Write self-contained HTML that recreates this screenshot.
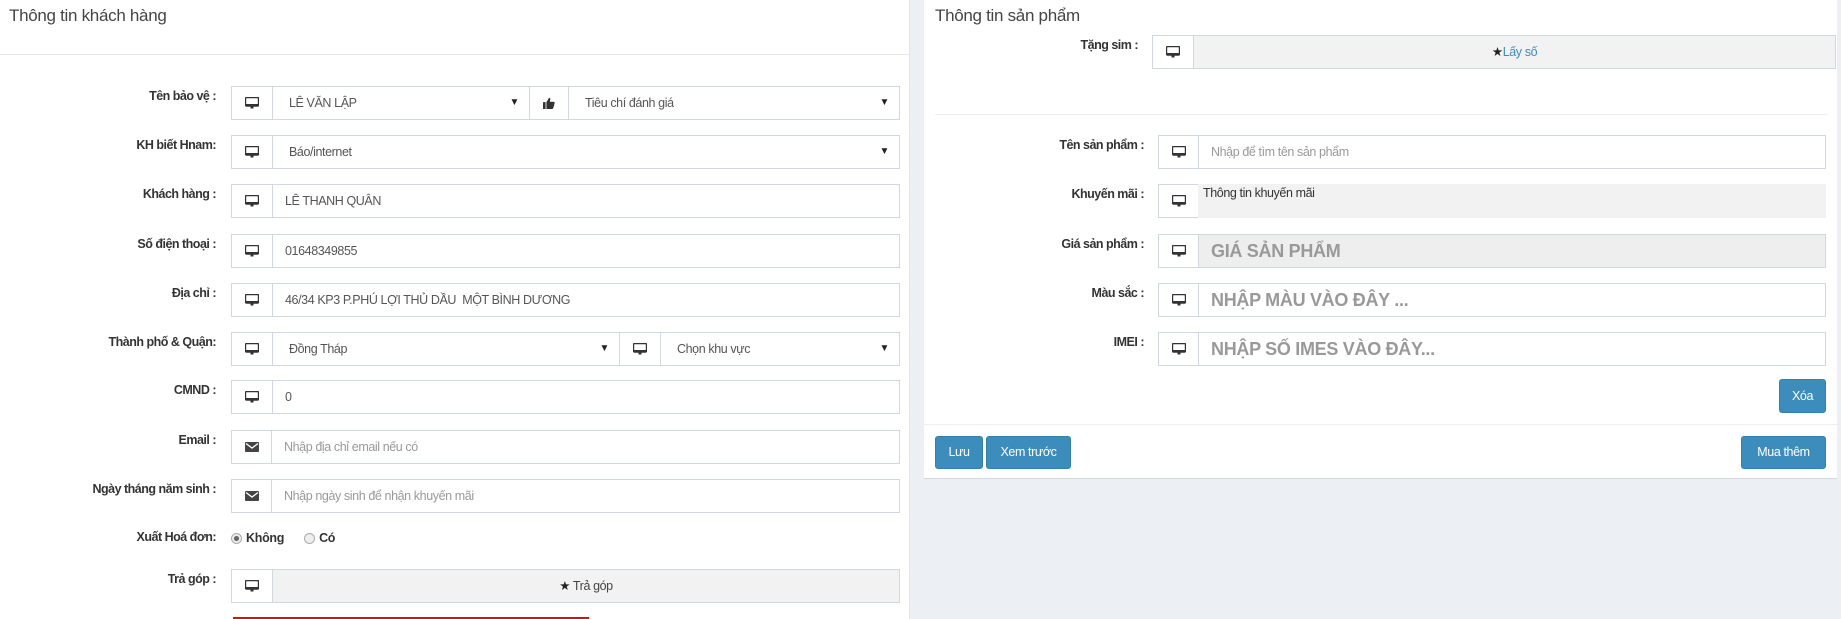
<!DOCTYPE html>
<html><head><meta charset="utf-8"><style>
*{box-sizing:border-box;margin:0;padding:0}
body{width:1841px;height:619px;overflow:hidden;background:#ecf0f5;font-family:"Liberation Sans",sans-serif;color:#333;position:relative}
.p{position:absolute;background:#fff}
.a{position:absolute}
.t{font-size:17px;color:#444;letter-spacing:-0.3px}
.l{position:absolute;font-size:12.5px;font-weight:bold;text-align:right;width:220px;letter-spacing:-0.5px}
.f{position:absolute;height:34px;border:1px solid #d2d6de;background:#fff;font-size:12.5px;color:#555;line-height:32px;padding-left:12px;letter-spacing:-0.4px}
.ad{position:absolute;height:34px;border:1px solid #d2d6de;background:#fff;display:flex;align-items:center;justify-content:center}
.g{background:#f2f2f2}
.ph{color:#999}
.big{font-size:18px;font-weight:bold;color:#999;letter-spacing:-0.3px}
.car{position:absolute;right:10px;top:0;font-size:10px;color:#222}
.btn{position:absolute;background:#3c8dbc;border:1px solid #367fa9;border-radius:3px;color:#fff;font-size:12.5px;text-align:center;line-height:31px;letter-spacing:-0.4px}
</style></head><body>
<svg width="0" height="0" style="position:absolute"><defs>
<symbol id="m" viewBox="0 0 14 12"><rect x="0.5" y="0.5" width="13" height="8.5" rx="1" fill="#fff" stroke="#333" stroke-width="1.4"/><rect x="1" y="7" width="12" height="2.5" fill="#333"/><rect x="5.5" y="9.5" width="3" height="2" fill="#333"/></symbol>
<symbol id="e" viewBox="0 0 14 12"><rect x="0" y="1" width="14" height="10" rx="1" fill="#444"/><path d="M1 2.5 L7 7 L13 2.5" fill="none" stroke="#fff" stroke-width="1.3"/></symbol>
<symbol id="th" viewBox="0 0 14 14"><rect x="0" y="6" width="3" height="8" fill="#333"/><path d="M4 6 L7 1 Q8.5 0.5 8.5 2.5 L8 5.5 L12.5 5.5 Q14 6 13.5 7.5 L12 13 Q11.5 14 10.5 14 L4 14 Z" fill="#333"/></symbol>
</defs></svg>

<div class="p" style="left:0;top:0;width:910px;height:619px;border-right:1px solid #e5e5e5"></div>
<div class="a t" style="left:9px;top:6px">Thông tin khách hàng</div>
<div class="a" style="left:0;top:54px;width:910px;height:1px;background:#e8e8e8"></div>

<div class="l" style="left:-4px;top:89px">Tên bảo vệ :</div>
<div class="ad" style="left:231px;top:86px;width:42px"><svg width="14" height="12"><use href="#m"/></svg></div>
<div class="f" style="left:272px;top:86px;width:258px;padding-left:16px">LÊ VĂN LẬP<span class="car">▼</span></div>
<div class="ad" style="left:529px;top:86px;width:40px"><svg width="12" height="12"><use href="#th"/></svg></div>
<div class="f" style="left:568px;top:86px;width:332px;padding-left:16px">Tiêu chí đánh giá<span class="car">▼</span></div>

<div class="l" style="left:-4px;top:138px">KH biết Hnam:</div>
<div class="ad" style="left:231px;top:135px;width:42px"><svg width="14" height="12"><use href="#m"/></svg></div>
<div class="f" style="left:272px;top:135px;width:628px;padding-left:16px">Báo/internet<span class="car">▼</span></div>

<div class="l" style="left:-4px;top:187px">Khách hàng :</div>
<div class="ad" style="left:231px;top:184px;width:42px"><svg width="14" height="12"><use href="#m"/></svg></div>
<div class="f" style="left:272px;top:184px;width:628px">LÊ THANH QUÂN</div>

<div class="l" style="left:-4px;top:237px">Số điện thoại :</div>
<div class="ad" style="left:231px;top:234px;width:42px"><svg width="14" height="12"><use href="#m"/></svg></div>
<div class="f" style="left:272px;top:234px;width:628px">01648349855</div>

<div class="l" style="left:-4px;top:286px">Địa chỉ :</div>
<div class="ad" style="left:231px;top:283px;width:42px"><svg width="14" height="12"><use href="#m"/></svg></div>
<div class="f" style="left:272px;top:283px;width:628px">46/34 KP3 P.PHÚ LỢI THỦ DẦU &nbsp;MỘT BÌNH DƯƠNG</div>

<div class="l" style="left:-4px;top:335px">Thành phố &amp; Quận:</div>
<div class="ad" style="left:231px;top:332px;width:42px"><svg width="14" height="12"><use href="#m"/></svg></div>
<div class="f" style="left:272px;top:332px;width:348px;padding-left:16px">Đồng Tháp<span class="car">▼</span></div>
<div class="ad" style="left:619px;top:332px;width:42px"><svg width="14" height="12"><use href="#m"/></svg></div>
<div class="f" style="left:660px;top:332px;width:240px;padding-left:16px">Chọn khu vực<span class="car">▼</span></div>

<div class="l" style="left:-4px;top:383px">CMND :</div>
<div class="ad" style="left:231px;top:380px;width:42px"><svg width="14" height="12"><use href="#m"/></svg></div>
<div class="f" style="left:272px;top:380px;width:628px">0</div>

<div class="l" style="left:-4px;top:433px">Email :</div>
<div class="ad" style="left:231px;top:430px;width:41px"><svg width="14" height="12"><use href="#e"/></svg></div>
<div class="f ph" style="left:271px;top:430px;width:629px">Nhập địa chỉ email nếu có</div>

<div class="l" style="left:-4px;top:482px">Ngày tháng năm sinh :</div>
<div class="ad" style="left:231px;top:479px;width:41px"><svg width="14" height="12"><use href="#e"/></svg></div>
<div class="f ph" style="left:271px;top:479px;width:629px">Nhập ngày sinh để nhận khuyến mãi</div>

<div class="l" style="left:-4px;top:530px">Xuất Hoá đơn:</div>
<div class="a" style="left:231px;top:531px;font-size:12.5px;font-weight:bold;display:flex;align-items:center;letter-spacing:-0.3px">
<span style="width:11px;height:11px;border:1px solid #aaa;border-radius:50%;display:inline-block;background:radial-gradient(#666 35%,#eee 45%);margin-right:4px"></span>Không
<span style="width:11px;height:11px;border:1px solid #aaa;border-radius:50%;display:inline-block;background:#eee;margin:0 4px 0 20px"></span>Có</div>

<div class="l" style="left:-4px;top:572px">Trả góp :</div>
<div class="ad" style="left:231px;top:569px;width:42px;height:34px"><svg width="14" height="12"><use href="#m"/></svg></div>
<div class="f g" style="left:272px;top:569px;width:628px;text-align:center;padding:0;color:#444"><span style="color:#222">★</span> Trả góp</div>
<div class="a" style="left:233px;top:617px;width:356px;height:2px;background:#f00"></div>

<div class="p" style="left:924px;top:0;width:913px;height:479px;border-bottom:1px solid #d2d6de"></div>
<div class="a t" style="left:935px;top:6px">Thông tin sản phẩm</div>
<div class="l" style="left:918px;top:38px">Tặng sim :</div>
<div class="ad" style="left:1152px;top:35px;width:42px"><svg width="14" height="12"><use href="#m"/></svg></div>
<div class="f g" style="left:1193px;top:35px;width:643px;text-align:center;padding:0;color:#3c8dbc"><span style="color:#222">★</span>Lấy số</div>
<div class="a" style="left:935px;top:114px;width:892px;height:1px;background:#eee"></div>

<div class="l" style="left:924px;top:138px">Tên sản phẩm :</div>
<div class="ad" style="left:1158px;top:135px;width:41px"><svg width="14" height="12"><use href="#m"/></svg></div>
<div class="f ph" style="left:1198px;top:135px;width:628px">Nhập để tìm tên sản phẩm</div>

<div class="l" style="left:924px;top:187px">Khuyến mãi :</div>
<div class="ad" style="left:1158px;top:184px;width:41px"><svg width="14" height="12"><use href="#m"/></svg></div>
<div class="f g" style="left:1198px;top:184px;width:628px;border:none;line-height:18px;padding-left:5px;color:#333">Thông tin khuyến mãi</div>

<div class="l" style="left:924px;top:237px">Giá sản phẩm :</div>
<div class="ad" style="left:1158px;top:234px;width:41px"><svg width="14" height="12"><use href="#m"/></svg></div>
<div class="f big" style="left:1198px;top:234px;width:628px;background:#eee">GIÁ SẢN PHẨM</div>

<div class="l" style="left:924px;top:286px">Màu sắc :</div>
<div class="ad" style="left:1158px;top:283px;width:41px"><svg width="14" height="12"><use href="#m"/></svg></div>
<div class="f big" style="left:1198px;top:283px;width:628px">NHẬP MÀU VÀO ĐÂY ...</div>

<div class="l" style="left:924px;top:335px">IMEI :</div>
<div class="ad" style="left:1158px;top:332px;width:41px"><svg width="14" height="12"><use href="#m"/></svg></div>
<div class="f big" style="left:1198px;top:332px;width:628px">NHẬP SỐ IMES VÀO ĐÂY...</div>

<div class="btn" style="left:1779px;top:379px;width:47px;height:34px;line-height:32px">Xóa</div>
<div class="a" style="left:924px;top:424px;width:913px;height:1px;background:#eee"></div>
<div class="btn" style="left:935px;top:436px;width:48px;height:33px">Lưu</div>
<div class="btn" style="left:986px;top:436px;width:85px;height:33px">Xem trước</div>
<div class="btn" style="left:1741px;top:436px;width:85px;height:33px">Mua thêm</div>
</body></html>
